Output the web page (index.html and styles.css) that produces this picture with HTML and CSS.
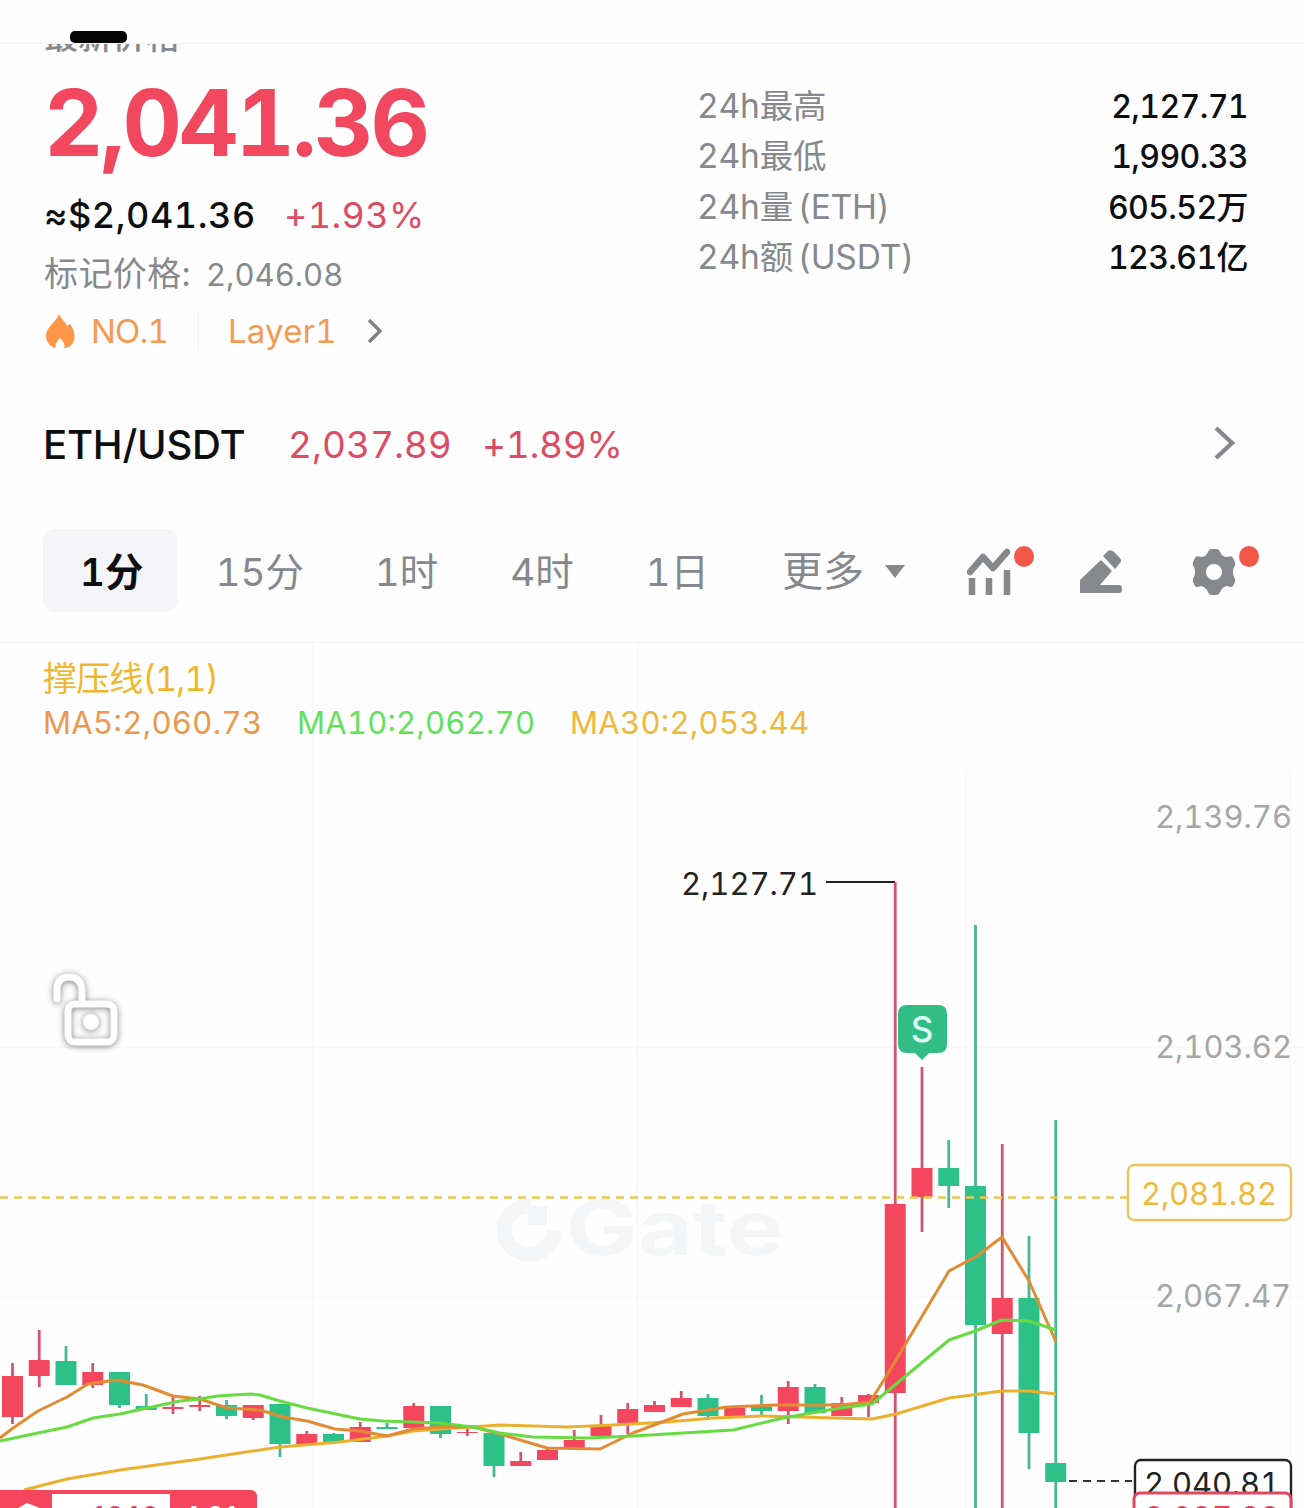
FILE: index.html
```
<!DOCTYPE html>
<html lang="zh-CN">
<head>
<meta charset="utf-8">
<title>ETH/USDT</title>
<link rel="stylesheet" href="styles.css">
</head>
<body>
<div class="page">
    <header class="topbar"><span class="tab-mark"></span></header>

    <section class="summary">
        <div class="price-box">
            <div class="label-cut"><span>最新价格</span></div>
            <div class="price">2,041.36</div>
            <div class="fiat"><span class="fiat-value">≈$2,041.36</span><span class="red change">+1.93%</span></div>
            <div class="mark"><span class="mark-label">标记价格:</span><span class="mark-value">2,046.08</span></div>
            <div class="tags">
                <svg class="flame" width="30" height="36" viewBox="0 0 30 36"><path d="M14 1C16 6 20 8 22 13L25 11C31 19 31 29 25 33Q23 35 19 35Q21 31 15 25Q9 31 11 35Q2 33 1 24C0 14 11 10 14 1Z" fill="#ff9648"/></svg>
                <span class="tag-no">NO.1</span>
                <span class="tag-line"></span>
                <span class="tag-layer">Layer1</span>
                <svg width="18" height="28" viewBox="0 0 18 28"><path d="M3 3L14 14L3 25" fill="none" stroke="#7d8286" stroke-width="3.4"/></svg>
            </div>
        </div>
        <div class="stats">
            <div class="stat"><span>24h最高</span><b>2,127.71</b></div>
            <div class="stat"><span>24h最低</span><b>1,990.33</b></div>
            <div class="stat"><span>24h量 (ETH)</span><b>605.52万</b></div>
            <div class="stat"><span>24h额 (USDT)</span><b>123.61亿</b></div>
        </div>
    </section>

    <section class="pair">
        <span class="pair-name">ETH/USDT</span>
        <span class="red pair-price">2,037.89</span>
        <span class="red pair-change">+1.89%</span>
        <svg class="pair-arrow" width="26" height="38" viewBox="0 0 26 38"><path d="M4 4L20 19L4 34" fill="none" stroke="#85898d" stroke-width="4.4"/></svg>
    </section>

    <nav class="periods">
        <span class="period active">1分</span>
        <span class="period wide">15分</span>
        <span class="period">1时</span>
        <span class="period">4时</span>
        <span class="period">1日</span>
        <span class="period more">更多 <i class="caret"></i></span>
        <span class="tool">
            <svg width="46" height="48" viewBox="0 0 46 48" fill="none" stroke="#85898d" stroke-width="6.5">
                <path d="M3 24L16 9L26 20L40 4" stroke-linejoin="round" stroke-linecap="round"/>
                <path d="M5 30V47M22 30V47M40 22V47"/>
            </svg>
            <i class="dot"></i>
        </span>
        <span class="tool">
            <svg width="44" height="46" viewBox="0 0 44 46" fill="#85898d">
                <path d="M1 31L22 11L33 22L21 36H40Q43 36 43 40Q43 44 40 44H1Z"/>
                <path d="M24 7L29 2Q32 0 35 3L41 9Q43 12 41 14L36 20Z"/>
            </svg>
        </span>
        <span class="tool">
            <svg width="44" height="48" viewBox="0 0 44 48"><path fill="#85898d" fill-rule="evenodd" d="M19 1H25Q27 1 28 4Q30 9 35 9Q40 7 41 10L43 14Q44 17 42 19Q40 24 42 29Q44 31 43 34L41 38Q40 40 35 38Q30 39 28 44Q27 47 25 47H19Q17 47 16 44Q14 39 9 38Q4 40 3 38L1 34Q0 31 2 29Q4 24 2 19Q0 17 1 14L3 10Q4 7 9 9Q14 9 16 4Q17 1 19 1ZM22 16A8 8 0 1 0 22 32A8 8 0 1 0 22 16Z"/></svg>
            <i class="dot"></i>
        </span>
    </nav>

    <section class="chart">
        <svg id="chart" width="1304" height="865" viewBox="0 643 1304 865">
            <g stroke="#f7f8f8" stroke-width="1.5">
                <path d="M313 643V1508M637.5 643V1508M966 770V1508M1290 770V1508M0 1047.500H1304M0 1297.500H1304"/>
            </g>
            <g fill="none" stroke="#f3f5f6" stroke-width="15">
                <path d="M531 1206A25 24 0 1 0 554 1230"/>
                <path d="M528 1206H547V1225H528Z" fill="#f3f5f6" stroke="none"/>
            </g>
            <text class="watermark" x="566" y="1255" textLength="218" lengthAdjust="spacingAndGlyphs">Gate</text>
            <text class="legend" x="43" y="691" fill="#f0b72c" textLength="176">撑压线(1,1)</text>
            <text class="ma" x="43" y="734" fill="#ea984c" textLength="219">MA5:2,060.73</text>
            <text class="ma" x="297" y="734" fill="#63e05a" textLength="238">MA10:2,062.70</text>
            <text class="ma" x="570" y="734" fill="#efb73b" textLength="239">MA30:2,053.44</text>
            <text class="axis" x="1155" y="828" textLength="137">2,139.76</text>
            <text class="axis" x="1155" y="1058" textLength="137">2,103.62</text>
            <text class="axis" x="1155" y="1307" textLength="136">2,067.47</text>
            <text class="peak" x="681" y="895" textLength="137">2,127.71</text>
            <path d="M826 882H895" stroke="#222" stroke-width="2"/>
            <g id="candles"></g>
            <g id="lines" fill="none" stroke-width="3" stroke-linejoin="round"></g>
            <path d="M0 1197.500H1127" stroke="#ebc84f" stroke-width="2.400" stroke-dasharray="8 6"/>
            <path d="M1069 1481H1132" stroke="#333" stroke-width="2" stroke-dasharray="8 6"/>
            <g class="lock" fill="none" stroke="#fff" stroke-width="7" stroke-linecap="round">
                <path d="M57 999V988Q58 977 69 977Q81 977 82 990V1003"/>
                <rect x="68" y="1004" width="46" height="38" rx="7"/>
                <circle cx="91" cy="1022" r="8" fill="#fff" stroke="none"/>
            </g>
            <path d="M907 1005H938Q947 1005 947 1014V1044Q947 1053 938 1053H929L922 1060L915 1053H907Q898 1053 898 1044V1014Q898 1005 907 1005Z" fill="#32bd87"/>
            <text class="sell" x="922" y="1042">S</text>
            <rect x="1128" y="1165" width="163" height="55" rx="6" fill="#fff" stroke="#edc359" stroke-width="2.400"/>
            <text class="tag-text" x="1141" y="1205" fill="#efb83e" textLength="136">2,081.82</text>
            <rect x="1135" y="1460" width="156" height="60" rx="6" fill="#fff" stroke="#222" stroke-width="2.400"/>
            <text class="tag-text" x="1144" y="1495" fill="#222" textLength="136">2,040.81</text>
            <rect x="1134" y="1493" width="157" height="50" rx="6" fill="#fff" stroke="#e0475f" stroke-width="3"/>
            <text class="tag-text" x="1144" y="1529" fill="#e0475f" textLength="136">2,037.89</text>
            <rect x="-10" y="1490" width="267" height="50" rx="6" fill="#f5465d"/>
            <rect x="52" y="1494" width="118" height="40" fill="#fff"/>
            <path d="M18 1508L27 1503L40 1508Z" fill="#fff"/>
            <text class="tag-text" x="74" y="1529" fill="#e0475f" textLength="86">-10.10</text>
            <text class="tag-text" x="184" y="1529" fill="#fff" textLength="58">1.01</text>
        </svg>
    </section>
</div>

<script>
// color, high, body top, body bottom, low
const candles = [
    ['r', 1363, 1376, 1417, 1424], ['r', 1330, 1360, 1376, 1387],
    ['g', 1346, 1361, 1385, 1385], ['r', 1363, 1372, 1385, 1388],
    ['g', 1372, 1372, 1405, 1408], ['g', 1394, 1406, 1410, 1410],
    ['r', 1395, 1407, 1409, 1414], ['r', 1396, 1405, 1407, 1411],
    ['g', 1400, 1405, 1416, 1419], ['r', 1405, 1405, 1418, 1420],
    ['g', 1404, 1404, 1444, 1457], ['r', 1431, 1434, 1444, 1444],
    ['g', 1433, 1434, 1442, 1442], ['r', 1422, 1427, 1442, 1442],
    ['g', 1423, 1427, 1429, 1429], ['r', 1403, 1406, 1428, 1431],
    ['g', 1406, 1406, 1434, 1438], ['r', 1429, 1432, 1433, 1436],
    ['g', 1433, 1433, 1466, 1477], ['r', 1452, 1461, 1466, 1466],
    ['r', 1448, 1450, 1460, 1460], ['r', 1430, 1440, 1449, 1449],
    ['r', 1415, 1426, 1436, 1436], ['r', 1403, 1409, 1423, 1434],
    ['r', 1401, 1405, 1412, 1412], ['r', 1391, 1398, 1407, 1407],
    ['g', 1394, 1398, 1416, 1418], ['r', 1407, 1408, 1416, 1416],
    ['g', 1395, 1406, 1411, 1415], ['r', 1381, 1387, 1411, 1424],
    ['g', 1384, 1387, 1413, 1413], ['r', 1397, 1403, 1416, 1416],
    ['r', 1394, 1395, 1403, 1417], ['r', 882, 1204, 1393, 1508],
    ['r', 1067, 1168, 1197, 1232], ['g', 1140, 1168, 1186, 1208],
    ['g', 925, 1186, 1325, 1508], ['r', 1144, 1298, 1334, 1508],
    ['g', 1236, 1298, 1433, 1469], ['g', 1120, 1463, 1482, 1508]
];
const averages = {
    '#ebb02e': '24,1490 67,1479 120,1470 200,1459 280,1447 340,1442 387,1436 413,1431 440,1429 500,1425 567,1427 613,1425 667,1422 713,1418 763,1416 800,1417 872,1419 896,1414 949,1398 1002,1391 1029,1391 1056,1394',
    '#e18c34': '0,1438 13,1428 38,1411 67,1397 88,1384 117,1380 143,1385 173,1396 200,1399 227,1408 260,1410 283,1417 307,1421 335,1429 360,1431 387,1436 413,1429 440,1427 473,1427 500,1434 547,1448 600,1449 633,1433 683,1414 727,1407 777,1405 840,1405 870,1402 887,1375 949,1271 977,1256 1002,1237 1029,1281 1056,1342',
    '#66dc42': '0,1441 33,1434 67,1427 93,1418 120,1414 147,1408 180,1401 200,1399 217,1396 250,1394 260,1395 280,1401 307,1408 360,1419 383,1421 440,1423 473,1427 500,1433 533,1437 587,1438 633,1436 733,1430 783,1418 840,1408 872,1404 949,1340 975,1331 1002,1320 1029,1321 1056,1330'
};
let bars = '';
candles.forEach(([type, high, top, bottom, low], i) => {
    const x = 12.5 + i * 26.75;
    const wick = type === 'r' ? '#d1566b' : '#48b68e';
    const body = type === 'r' ? '#f4475e' : '#2cc188';
    bars += `<path d="M${x} ${high}V${low}" stroke="${wick}" stroke-width="2.8"/>`;
    bars += `<rect x="${x - 10.5}" y="${top}" width="21" height="${bottom - top}" fill="${body}"/>`;
});
document.getElementById('candles').innerHTML = bars;

let paths = '';
for (const color in averages) {
    paths += `<polyline points="${averages[color]}" stroke="${color}"/>`;
}
document.getElementById('lines').innerHTML = paths;
</script>
</body>
</html>
```
FILE: styles.css
```
* {
    box-sizing: border-box;
}
body {
    margin: 0;
    background: #fefefe;
    color: #0d0e10;
    font-family: Inter, "Noto Sans CJK SC", sans-serif;
    font-variant-numeric: tabular-nums;
}
.page {
    width: 1304px;
    height: 1508px;
    overflow: hidden;
}
.red {
    color: #dc4c64;
}
.topbar {
    height: 44px;
    padding: 31px 0 0 70px;
    border-bottom: 1px solid #f1f2f3;
}
.tab-mark {
    display: block;
    width: 57px;
    height: 12px;
    border-radius: 5px;
    background: #050505;
}

.summary {
    display: flex;
    height: 338px;
    padding: 0 56px 0 44px;
}
.price-box {
    width: 655px;
}
.label-cut {
    display: flex;
    align-items: flex-end;
    height: 10px;
    overflow: hidden;
    color: #85898d;
    font-size: 34px;
    font-weight: 500;
}
.label-cut span {
    line-height: 40px;
    margin-bottom: -3px;
}
.price {
    height: 114px;
    line-height: 138px;
    color: #f1475f;
    font-size: 92px;
    font-weight: 700;
    letter-spacing: -2.9px;
}
.fiat {
    display: flex;
    height: 60px;
    margin-top: 17px;
    line-height: 60px;
    font-size: 36px;
    font-weight: 500;
}
.fiat-value {
    width: 240px;
    letter-spacing: 0.6px;
}
.change {
    font-weight: 400;
    letter-spacing: 0.4px;
}
.mark {
    display: flex;
    height: 58px;
    line-height: 58px;
    color: #85898d;
    font-size: 34px;
}
.mark-label {
    width: 162px;
    letter-spacing: 0.4px;
}
.mark-value {
    padding-top: 1px;
    font-size: 31px;
}
.tags {
    display: flex;
    align-items: center;
    height: 56px;
    color: #f59a52;
    font-size: 33px;
}
.flame {
    margin: 0 16px 0 1px;
}
.tag-no {
    width: 107px;
    letter-spacing: -0.8px;
}
.tag-line {
    width: 1px;
    height: 38px;
    margin-right: 29px;
    background: #eef0f1;
}
.tag-layer {
    width: 138px;
    letter-spacing: 0.2px;
}

.stats {
    flex: 1;
    margin-left: -2px;
    padding-top: 37px;
}
.stat {
    display: flex;
    justify-content: space-between;
    height: 50.300px;
    line-height: 50px;
    color: #85898d;
    font-size: 33.500px;
    letter-spacing: -0.2px;
    word-spacing: -4px;
}
.stat b {
    padding-top: 1px;
    color: #0d0e10;
    font-size: 32px;
    font-weight: 500;
    letter-spacing: -0.6px;
}

.pair {
    display: flex;
    align-items: center;
    height: 117px;
    padding: 9px 66px 0 43px;
    border-bottom: 1px solid #fafafb;
    font-size: 37px;
}
.pair-name {
    width: 245px;
    font-size: 40px;
    font-weight: 500;
    letter-spacing: -0.2px;
}
.pair-price {
    width: 194px;
}
.pair-change {
    letter-spacing: -0.3px;
}
.pair-arrow {
    margin: -4px 0 0 auto;
}

.periods {
    display: flex;
    align-items: center;
    height: 144px;
    padding-left: 43px;
    border-bottom: 1px solid #f1f2f3;
    color: #85898d;
    font-size: 38.500px;
}
.period {
    width: 136px;
    height: 83px;
    padding: 2px 0 0 37px;
    line-height: 83px;
}
.active {
    border-radius: 12px;
    background: #f5f5f8;
    color: #0d0e10;
    font-weight: 600;
}
.wide {
    width: 160px;
}
.more {
    display: flex;
    align-items: center;
    width: 224px;
    padding-left: 38px;
    font-size: 41px;
}
.caret {
    margin-left: 21px;
    border: 10px solid transparent;
    border-top: 13px solid #85898d;
    border-bottom: 0;
}
.tool {
    position: relative;
    display: flex;
    width: 113px;
    padding-top: 2px;
}
.dot {
    position: absolute;
    top: 0;
    left: 47px;
    width: 20px;
    height: 21px;
    border-radius: 50%;
    background: #f1584a;
}

.chart svg {
    display: block;
}
.legend {
    font-size: 34px;
}
.ma {
    font-size: 31px;
}
.axis {
    fill: #a4a6a8;
    font-size: 31px;
}
.peak {
    fill: #222;
    font-size: 31px;
}
.tag-text {
    font-size: 31px;
}
.watermark {
    fill: #f3f5f6;
    font-size: 76px;
    font-weight: 700;
}
.sell {
    fill: #d9fff0;
    font-size: 35px;
    font-weight: 500;
    text-anchor: middle;
}
.lock {
    filter: drop-shadow(0 1px 3px rgba(0, 0, 0, 0.5));
}
```
